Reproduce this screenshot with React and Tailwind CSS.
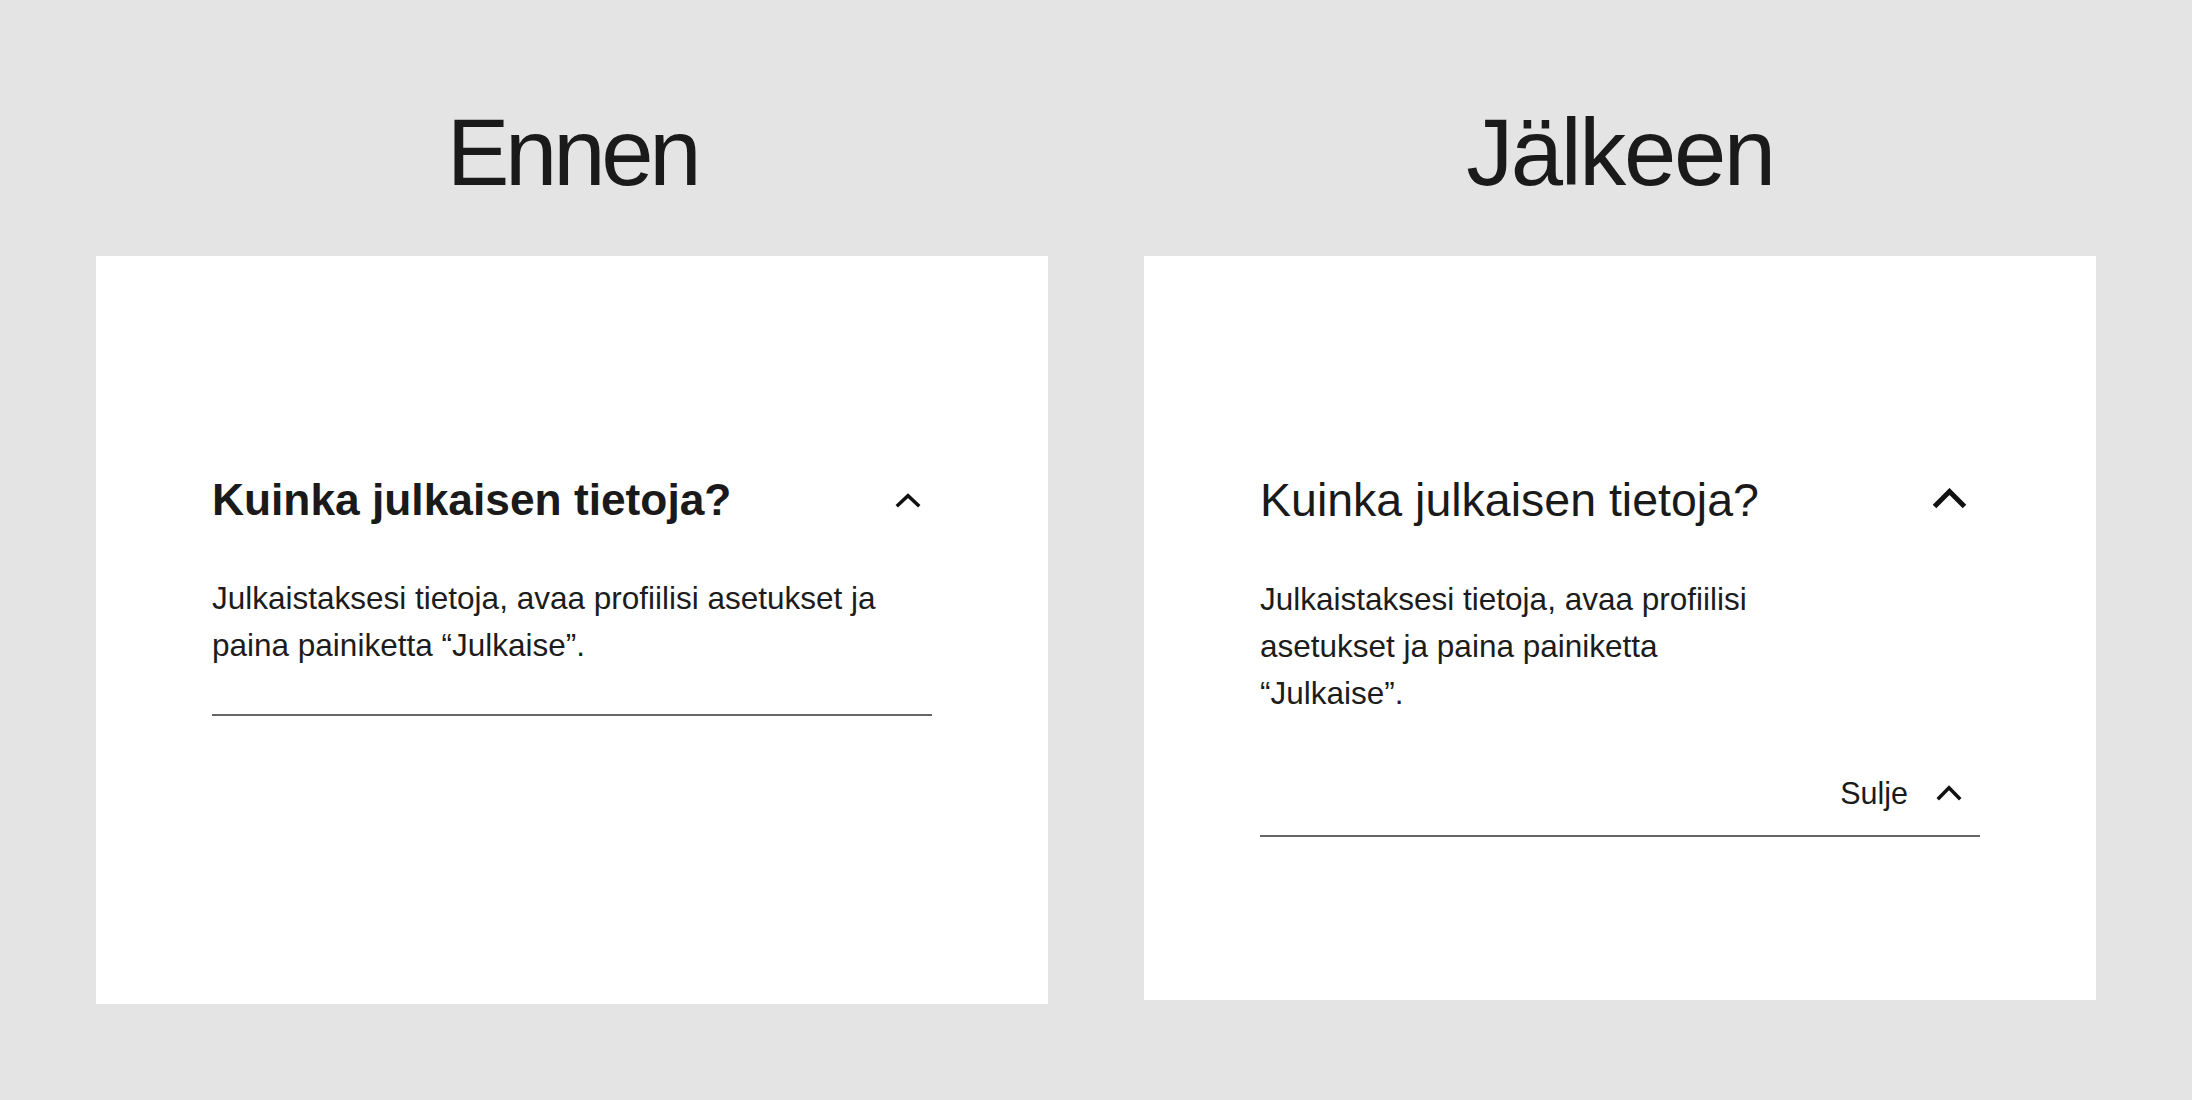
const font = { fontFamily: '"Liberation Sans", Arial, sans-serif' };

function Chevron({ w, h, stroke, className }) {
  return (
    <svg
      width={w}
      height={h}
      viewBox={`0 0 ${w} ${h}`}
      className={className}
      fill="none"
      stroke="#111"
      strokeWidth={stroke}
      strokeLinejoin="miter"
    >
      <polyline points={`${stroke / 2},${h - stroke / 2} ${w / 2},${stroke / 2 + 1} ${w - stroke / 2},${h - stroke / 2}`} />
    </svg>
  );
}

function Before() {
  return (
    <div className="h-[748px] w-[952px] bg-white px-[116px] pt-[218px]">
      <div className="flex h-[52px] items-center justify-between">
        <h2 className="text-[44.3px] font-bold leading-[52px] text-[#1a1a1a]">
          Kuinka julkaisen tietoja?
        </h2>
        <Chevron w={26} h={15} stroke={3.5} className="mr-[11px]" />
      </div>
      <p className="mt-[49px] text-[31.5px] leading-[47px] text-[#1c1c1c]">
        Julkaistaksesi tietoja, avaa profiilisi asetukset ja paina painiketta “Julkaise”.
      </p>
      <div className="mt-[45px] h-[2px] bg-[#666666]" />
    </div>
  );
}

function After() {
  return (
    <div className="h-[744px] w-[952px] bg-white px-[116px] pt-[218px]">
      <div className="flex h-[52px] items-center justify-between">
        <h2 className="text-[46.5px] font-normal leading-[52px] text-[#1a1a1a]">
          Kuinka julkaisen tietoja?
        </h2>
        <Chevron w={35} h={21} stroke={5} className="mr-[13px] -mt-[3px]" />
      </div>
      <p className="mt-[50px] max-w-[510px] text-[31.5px] leading-[47px] text-[#1c1c1c]">
        Julkaistaksesi tietoja, avaa profiilisi asetukset ja paina painiketta “Julkaise”.
      </p>
      <div className="mt-[58px] flex h-[36px] items-center justify-end">
        <span className="text-[30.5px] leading-[36px] text-[#1a1a1a]">Sulje</span>
        <Chevron w={26} h={16} stroke={3.5} className="ml-[28px] mr-[18px]" />
      </div>
      <div className="mt-[24px] h-[2px] bg-[#666666]" />
    </div>
  );
}

export default function App() {
  return (
    <div className="min-h-[1100px] w-full bg-[#e4e4e4]" style={font}>
      <div className="flex gap-[96px] px-[96px] pt-[106px]">
        <div className="flex w-[952px] flex-col items-center">
          <h1 className="mb-[56px] h-[94px] text-[94px] font-normal leading-[94px] tracking-[-0.045em] text-[#1a1a1a]">
            Ennen
          </h1>
          <Before />
        </div>
        <div className="flex w-[952px] flex-col items-center">
          <h1 className="mb-[56px] h-[94px] text-[94px] font-normal leading-[94px] tracking-[-0.025em] text-[#1a1a1a]">
            Jälkeen
          </h1>
          <After />
        </div>
      </div>
    </div>
  );
}
